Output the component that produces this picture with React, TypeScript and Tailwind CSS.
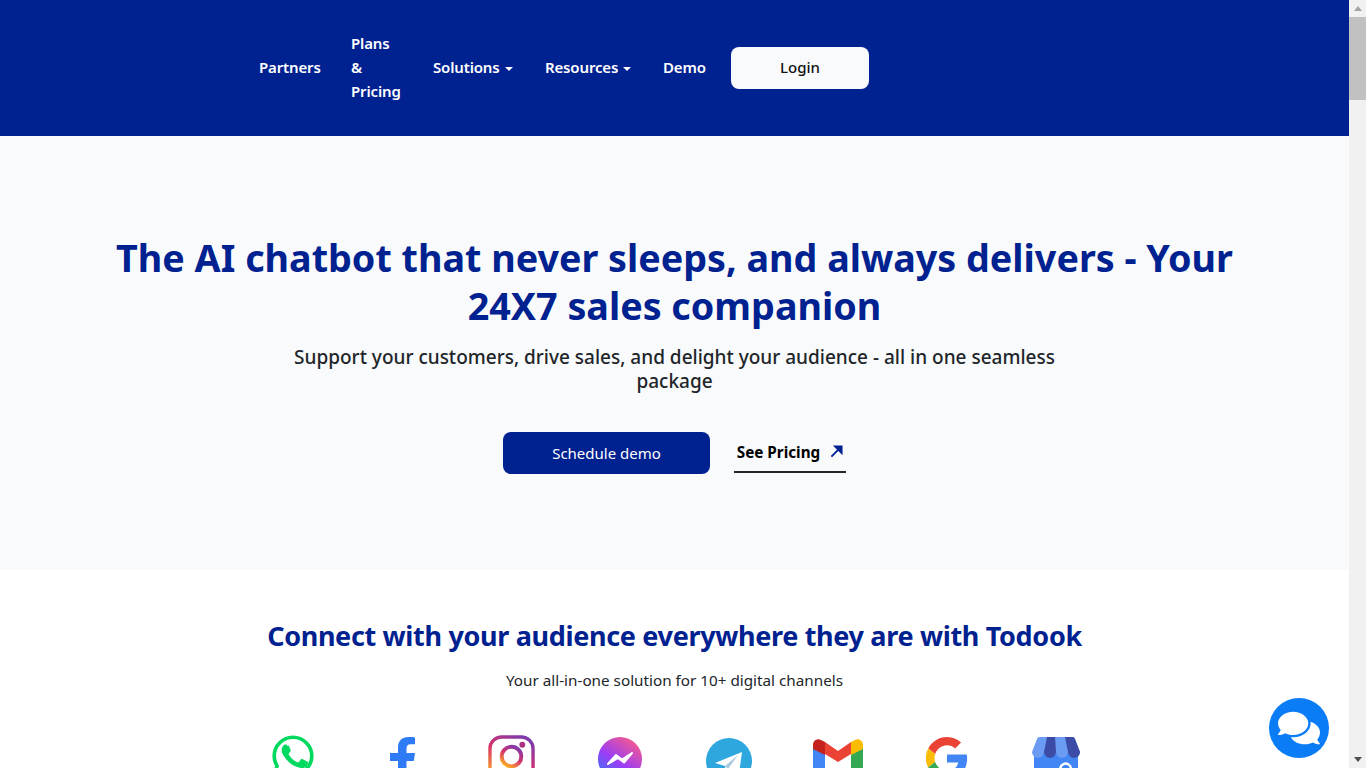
import { FaComments } from 'react-icons/fa';

const font = { fontFamily: '"Noto Sans", sans-serif' };

function Caret() {
  return <span className="ml-[5px] inline-block align-middle border-x-[4px] border-t-[4px] border-x-transparent border-t-white" />;
}

function Whatsapp() {
  return (
    <svg viewBox="0 0 48 48" className="w-[44px] h-[44px] -mt-px">
      <path d="M24 3.500C12.700 3.500 3.500 12.700 3.500 24c0 3.900 1.100 7.600 3.100 10.800L4 44l9.500-2.500c3 1.700 6.800 2.700 10.500 2.700 11.300 0 20.500-9.100 20.500-20.200S35.300 3.500 24 3.500z" fill="#fff" stroke="#00d95f" strokeWidth="4" />
      <path d="M18 13c-.7-1.500-1.400-1.500-2-1.500-.6 0-1.200 0-1.800.5-.7.600-2.600 2.300-2.600 5.700s2.700 6.700 3 7.100c.4.500 5 7.700 12.100 10.500 5.900 2.300 7.100 1.900 8.400 1.700 1.300-.1 4.100-1.700 4.700-3.300.6-1.600.6-3 .4-3.300-.2-.3-.6-.5-1.300-.8l-4.700-2.200c-.6-.2-1.100-.3-1.600.4-.5.700-1.800 2.200-2.200 2.700-.4.500-.8.500-1.500.2-.7-.3-3-1.100-5.600-3.500-2.100-1.900-3.500-4.200-3.900-4.900-.4-.7 0-1.100.3-1.400.3-.3.7-.8 1-1.200.3-.4.400-.7.700-1.200.2-.5.100-.9-.1-1.200-.1-.3-1.400-3.600-2-4.800z" fill="#00d95f" />
    </svg>
  );
}

function Facebook() {
  return (
    <svg viewBox="0 0 25 48" className="w-[25px] h-[48px]">
      <path d="M8 48V24H0v-8h8v-5.500C8 4 12 0 18.500 0c2.500 0 5 .2 6.500.4v6.800h-4.500c-3 0-4 1.800-4 4.300V16h8.500l-1.200 8H16.500v24z" fill="#2f7bf6" />
    </svg>
  );
}

function Instagram() {
  return (
    <svg viewBox="0 0 48 48" className="w-[47px] h-[47px]">
      <defs>
        <linearGradient id="ig" x1="0.8" y1="0" x2="0.2" y2="1">
          <stop offset="0" stopColor="#7c3aad" />
          <stop offset="0.5" stopColor="#d6336c" />
          <stop offset="1" stopColor="#fdb022" />
        </linearGradient>
      </defs>
      <rect x="2" y="2" width="44" height="44" rx="12" fill="none" stroke="url(#ig)" strokeWidth="3.500" />
      <circle cx="24" cy="22" r="10" fill="none" stroke="url(#ig)" strokeWidth="4" />
      <circle cx="35" cy="10" r="3" fill="#a8327f" />
    </svg>
  );
}

function Messenger() {
  return (
    <svg viewBox="0 0 44 44" className="w-[44px] h-[44px]">
      <defs>
        <linearGradient id="ms" x1="0.1" y1="1" x2="0.8" y2="0">
          <stop offset="0" stopColor="#2f7cf6" />
          <stop offset="0.45" stopColor="#9a3df5" />
          <stop offset="1" stopColor="#fb5b88" />
        </linearGradient>
      </defs>
      <circle cx="22" cy="22" r="22" fill="url(#ms)" />
      <path d="M10 27l8-9 6 4.500 10-6.500-8 9.500-6-4.500z" fill="#fff" stroke="#fff" strokeWidth="2" strokeLinejoin="round" />
    </svg>
  );
}

function Telegram() {
  return (
    <svg viewBox="0 0 46 46" className="w-[46px] h-[46px]">
      <circle cx="23" cy="23" r="23" fill="#2ea6de" />
      <path d="M9 25l27-11-3 22-9-6-4 4-1-6z" fill="#fff" />
      <path d="M19 28l13-11-10 14z" fill="#a9c9dd" />
    </svg>
  );
}

function Gmail() {
  return (
    <svg viewBox="0 0 50 40" className="w-[50px] h-[40px]">
      <path d="M0 9v27a4 4 0 0 0 4 4h8V14z" fill="#4285f4" />
      <path d="M50 9v27a4 4 0 0 1-4 4h-8V14z" fill="#34a853" />
      <path d="M38 3v13l12-6V6c0-5-5-7-8-5z" fill="#fbbc04" />
      <path d="M12 3v13L0 10V6c0-5 5-7 8-5z" fill="#c5221f" />
      <path d="M12 3l13 9 13-9v12l-13 8-13-8z" fill="#ea4335" />
    </svg>
  );
}

function Google() {
  return (
    <svg viewBox="0 0 48 48" className="w-[42px] h-[42px]">
      <path d="M24 9.500c3.500 0 6.700 1.200 9.200 3.600l6.900-6.900C35.900 2.400 30.500 0 24 0 14.600 0 6.500 5.400 2.600 13.200l8 6.200C12.400 13.700 17.700 9.500 24 9.500z" fill="#ea4335" />
      <path d="M47 24.500c0-1.600-.1-3.100-.4-4.500H24v9h12.900c-.6 3-2.200 5.500-4.700 7.200l7.700 6c4.500-4.200 7.100-10.300 7.100-17.700z" fill="#4285f4" />
      <path d="M10.500 28.600a14.500 14.500 0 0 1 0-9.200l-8-6.200a24 24 0 0 0 0 21.600z" fill="#fbbc05" />
      <path d="M24 48c6.500 0 11.900-2.100 15.900-5.800l-7.700-6c-2.200 1.500-4.900 2.300-8.200 2.300-6.300 0-11.600-4.200-13.500-9.900l-8 6.200C6.500 42.600 14.600 48 24 48z" fill="#34a853" />
    </svg>
  );
}

function BusinessProfile() {
  return (
    <svg viewBox="0 0 48 48" className="w-[48px] h-[48px]">
      <rect x="2" y="12" width="44" height="36" rx="3" fill="#4285f4" />
      <path d="M8 0h32a3 3 0 0 1 3 2l5 13a6 6 0 0 1-12 0 6 6 0 0 1-12 0 6 6 0 0 1-12 0 6 6 0 0 1-12 0L5 2a3 3 0 0 1 3-2z" fill="#6b9bf2" />
      <path d="M15 0h8l1 15a6 6 0 0 1-12 0zM33 0h7a3 3 0 0 1 3 2l5 13a6 6 0 0 1-12 0z" fill="#3c4ba6" />
      <path d="M39 31a5.500 5.500 0 1 0-1.500 5" fill="none" stroke="#fff" strokeWidth="2.500" />
    </svg>
  );
}

const channels = [
  { Icon: Whatsapp, top: 'pt-0' },
  { Icon: Facebook, top: 'pt-[2px]' },
  { Icon: Instagram, top: 'pt-0' },
  { Icon: Messenger, top: 'pt-[2px]' },
  { Icon: Telegram, top: 'pt-[3px]' },
  { Icon: Gmail, top: 'pt-[4px]' },
  { Icon: Google, top: 'pt-[2px]' },
  { Icon: BusinessProfile, top: 'pt-[2px]' },
];

export default function App() {
  return (
    <div className="h-screen overflow-hidden flex bg-white" style={font}>
      <div className="flex-1 min-w-0 relative">
        <header className="h-[136px] bg-[#002190] flex items-center pl-[243px]">
          <nav className="flex items-center text-white text-[15px] leading-[24px] font-semibold tracking-[-0.15px]">
            <a className="pl-4 pb-[2px] w-[92px]">Partners</a>
            <a className="px-4 pb-[2px] w-[82px]">Plans &amp; Pricing</a>
            <a className="pl-4 pb-[2px] w-[112px] whitespace-nowrap">Solutions<Caret /></a>
            <a className="pl-4 pb-[2px] w-[118px] whitespace-nowrap">Resources<Caret /></a>
            <a className="pl-4 pb-[2px] w-[76px]">Demo</a>
            <button className="ml-2 pb-[2px] w-[138px] h-[42px] rounded-lg bg-[#f8fafc] text-[#111] text-[15px] font-medium tracking-normal">Login</button>
          </nav>
        </header>

        <section className="h-[434px] bg-[#f8fafc] flex flex-col items-center pt-[98px] text-center">
          <h1 className="w-[1130px] text-[37.7px] leading-[48px] font-bold text-[#002190]">
            The AI chatbot that never sleeps, and always delivers - Your 24X7 sales companion
          </h1>
          <p className="w-[800px] mt-[15px] text-[19px] leading-[24px] font-medium text-[#212529]">
            Support your customers, drive sales, and delight your audience - all in one seamless package
          </p>
          <div className="mt-[39px] flex items-center gap-[24px]">
            <button className="w-[207px] h-[42px] rounded-lg bg-[#002190] text-white text-[15px]">Schedule demo</button>
            <a className="w-[112px] h-[40px] flex items-center justify-center gap-[10px] border-b-2 border-[#212529] text-black text-[15.25px] font-bold">
              See Pricing
              <svg viewBox="0 0 14 14" className="w-[13px] h-[13px] mb-[2px]">
                <path d="M1.500 12.500L9 5M5.500 1.500h7V8.500z" fill="#002190" stroke="#002190" strokeWidth="2" />
              </svg>
            </a>
          </div>
        </section>

        <section className="flex flex-col items-center pt-[47px] text-center">
          <h2 className="text-[27px] leading-[38px] font-bold tracking-[-0.33px] text-[#002190]">
            Connect with your audience everywhere they are with Todook
          </h2>
          <p className="mt-[13px] text-[15.25px] leading-[24px] text-[#212529]">
            Your all-in-one solution for 10+ digital channels
          </p>
          <div className="mt-[43px] flex">
            {channels.map(({ Icon, top }, i) => (
              <div key={i} className={`w-[109px] flex justify-center items-start ${top}`}>
                <Icon />
              </div>
            ))}
          </div>
        </section>

        <button className="absolute right-[20px] bottom-[10px] w-[60px] h-[60px] rounded-full bg-[#0a7cf5] flex items-center justify-center text-white">
          <FaComments className="w-[42px] h-[42px]" />
        </button>
      </div>

      <aside className="w-[17px] h-full bg-[#f1f1f1] flex flex-col items-center">
        <div className="h-[17px] flex items-center justify-center">
          <span className="border-x-[4px] border-b-[5px] border-x-transparent border-b-[#a3a3a3]" />
        </div>
        <div className="w-full h-[83px] bg-[#c1c1c1]" />
        <div className="flex-1" />
        <div className="h-[17px] flex items-center justify-center">
          <span className="border-x-[4px] border-t-[5px] border-x-transparent border-t-[#505050]" />
        </div>
      </aside>
    </div>
  );
}
